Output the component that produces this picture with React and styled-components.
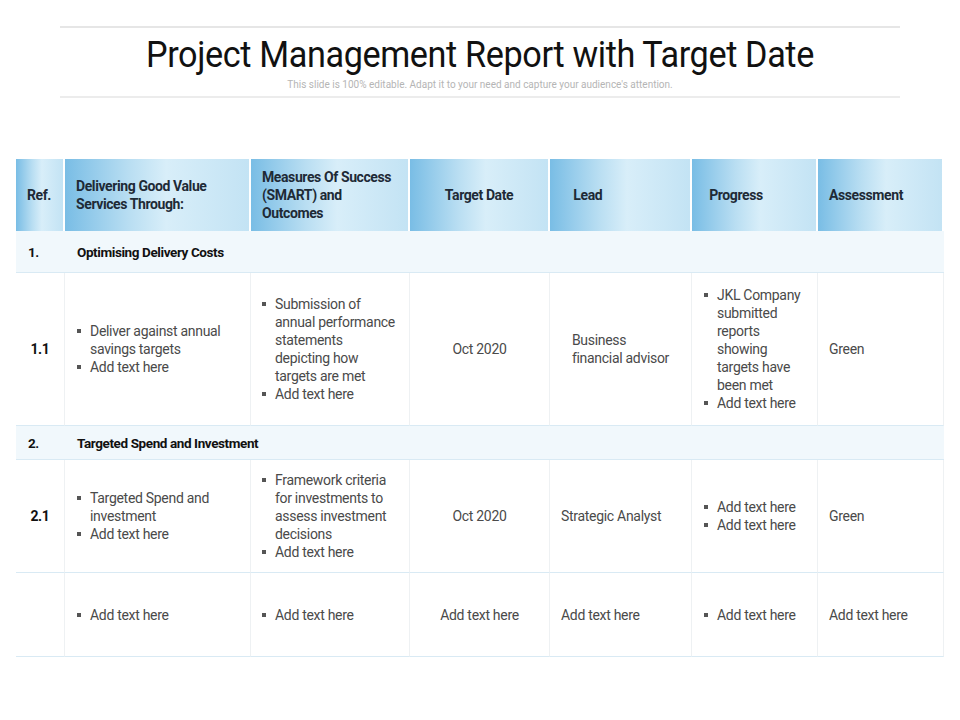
import React from 'react';
import styled, { createGlobalStyle } from 'styled-components';

const Global = createGlobalStyle`
  body { margin: 0; background: #fff; font-family: Roboto, "Liberation Sans", sans-serif; }
`;

const Page = styled.div`
  width: 960px;
  height: 720px;
  padding-top: 26px;
  box-sizing: border-box;
`;

const Header = styled.div`
  margin: 0 60px;
  border-top: 2px solid #e6e6e6;
  border-bottom: 2px solid #ececec;
  padding: 6px 0 6px;
  text-align: center;
`;

const Title = styled.h1`
  margin: 0;
  font-size: 36px;
  font-weight: 400;
  color: #111;
  letter-spacing: -0.4px;
  transform: scaleX(0.95);
`;

const Sub = styled.div`
  font-size: 10px;
  color: #b5b5b5;
  margin-top: 3px;
`;

const Grid = styled.div`
  margin: 61px 16px 0;
  display: grid;
  grid-template-columns: 49px 186px 159px 140px 142px 126px 126px;
  grid-template-rows: 72px 42px 153px 34px 113px 84px;
  font-size: 14px;
`;

const HeadCell = styled.div`
  background: linear-gradient(90deg, #79bde5 0%, #b9def2 35%, #d8eef9 55%, #c3e3f4 100%);
  border-right: 2px solid #fff;
  display: flex;
  align-items: center;
  justify-content: ${p => (p.center ? 'center' : 'flex-start')};
  padding: 0 11px;
  font-weight: 700;
  color: #1e2a36;
  font-size: 14px;
  line-height: 18px;
  letter-spacing: -0.4px;
`;

const Section = styled.div`
  background: #f1f8fc;
  border-bottom: 1px solid #d9eaf4;
  display: flex;
  align-items: center;
  padding: 0 12px;
  font-weight: 700;
  font-size: 13.5px;
  color: #111;
  letter-spacing: -0.4px;
  grid-column: ${p => p.span || 'auto'};
`;

const Cell = styled.div`
  border-right: 1px solid #eef1f3;
  border-bottom: 1px solid #d9eaf4;
  display: flex;
  align-items: center;
  justify-content: ${p => (p.center ? 'center' : 'flex-start')};
  padding: 0 ${p => (p.pad || 11)}px;
  color: #4a4a4a;
  font-size: 14px;
  letter-spacing: -0.3px;
  line-height: 18px;
  font-weight: ${p => (p.bold ? 700 : 400)};
  ${p => p.bold && 'color:#111;'}
`;

const List = styled.ul`
  margin: 0;
  padding: 0;
  list-style: none;
`;

const Item = styled.li`
  position: relative;
  padding-left: 14px;
  &::before {
    content: '';
    position: absolute;
    left: 1px;
    top: 7px;
    width: 4px;
    height: 4px;
    background: #555;
  }
`;

const Bullets = ({ items }) => (
  <List>{items.map((t, i) => <Item key={i}>{t}</Item>)}</List>
);

export default function App() {
  return (
    <Page>
      <Global />
      <Header>
        <Title>Project Management Report with Target Date</Title>
        <Sub>This slide is 100% editable. Adapt it to your need and capture your audience's attention.</Sub>
      </Header>
      <Grid>
        <HeadCell>Ref.</HeadCell>
        <HeadCell>Delivering Good Value Services Through:</HeadCell>
        <HeadCell>Measures Of Success (SMART) and Outcomes</HeadCell>
        <HeadCell center>Target Date</HeadCell>
        <HeadCell>&nbsp;&nbsp;&nbsp;&nbsp;Lead</HeadCell>
        <HeadCell>&nbsp;&nbsp;Progress</HeadCell>
        <HeadCell>Assessment</HeadCell>

        <Section>1.</Section>
        <Section span="2 / 8">Optimising Delivery Costs</Section>

        <Cell bold center>1.1</Cell>
        <Cell><Bullets items={['Deliver against annual savings targets', 'Add text here']} /></Cell>
        <Cell pad={10}><Bullets items={['Submission of annual performance statements depicting how targets are met', 'Add text here']} /></Cell>
        <Cell center>Oct 2020</Cell>
        <Cell center>Business<br />financial advisor</Cell>
        <Cell><Bullets items={['JKL Company submitted reports showing targets have been met', 'Add text here']} /></Cell>
        <Cell>Green</Cell>

        <Section>2.</Section>
        <Section span="2 / 8">Targeted Spend and Investment</Section>

        <Cell bold center>2.1</Cell>
        <Cell><Bullets items={['Targeted Spend and investment', 'Add text here']} /></Cell>
        <Cell pad={10}><Bullets items={['Framework criteria for investments to assess investment decisions', 'Add text here']} /></Cell>
        <Cell center>Oct 2020</Cell>
        <Cell>Strategic Analyst</Cell>
        <Cell><Bullets items={['Add text here', 'Add text here']} /></Cell>
        <Cell>Green</Cell>

        <Cell />
        <Cell><Bullets items={['Add text here']} /></Cell>
        <Cell pad={10}><Bullets items={['Add text here']} /></Cell>
        <Cell center>Add text here</Cell>
        <Cell>Add text here</Cell>
        <Cell><Bullets items={['Add text here']} /></Cell>
        <Cell>Add text here</Cell>
      </Grid>
    </Page>
  );
}
